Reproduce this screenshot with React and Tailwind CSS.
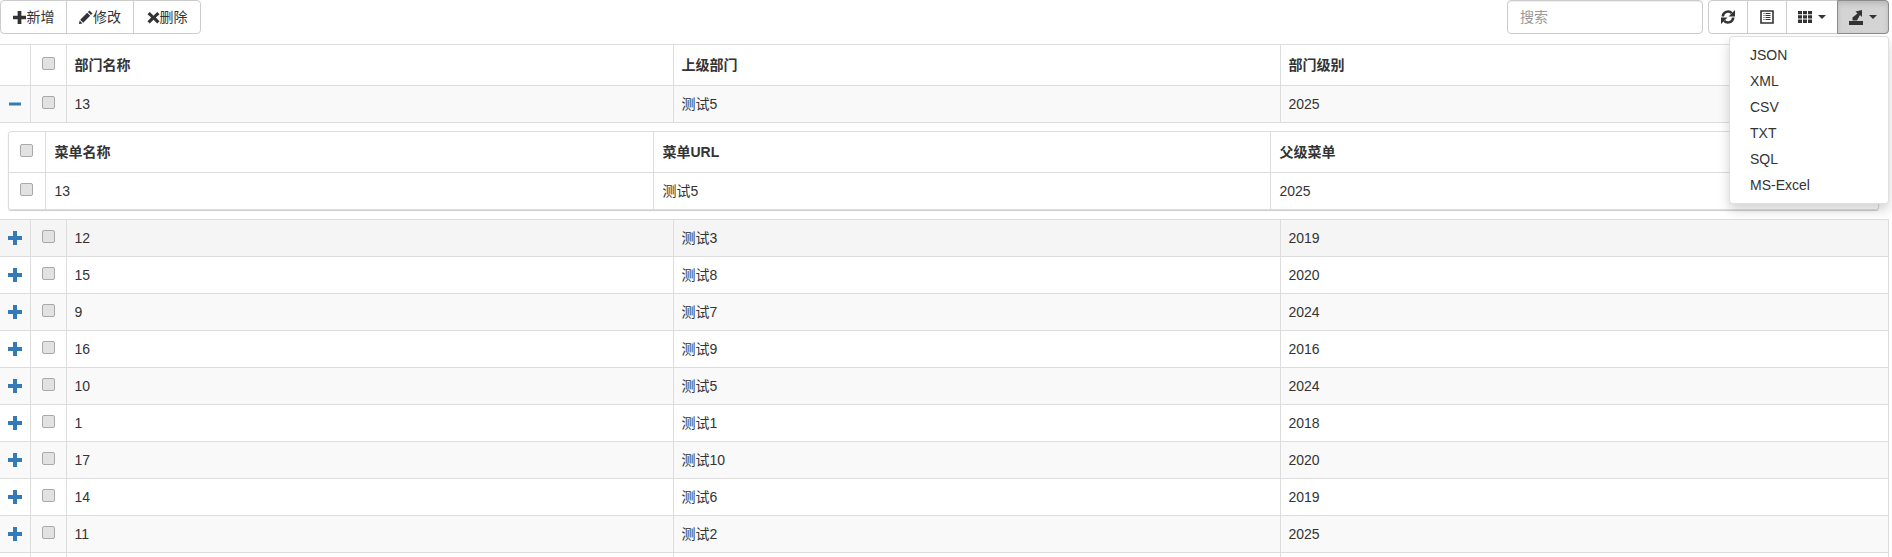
import { useState } from 'react';

const rows = [
  { id: '12', parent: '测试3', level: '2019', bg: 'bg-[#f5f5f5]' },
  { id: '15', parent: '测试8', level: '2020', bg: 'bg-white' },
  { id: '9', parent: '测试7', level: '2024', bg: 'bg-[#f9f9f9]' },
  { id: '16', parent: '测试9', level: '2016', bg: 'bg-white' },
  { id: '10', parent: '测试5', level: '2024', bg: 'bg-[#f9f9f9]' },
  { id: '1', parent: '测试1', level: '2018', bg: 'bg-white' },
  { id: '17', parent: '测试10', level: '2020', bg: 'bg-[#f9f9f9]' },
  { id: '14', parent: '测试6', level: '2019', bg: 'bg-white' },
  { id: '11', parent: '测试2', level: '2025', bg: 'bg-[#f9f9f9]' },
];

const exportTypes = ['JSON', 'XML', 'CSV', 'TXT', 'SQL', 'MS-Excel'];

const IconPlus = ({ className }) => (
  <svg viewBox="0 0 14 14" className={className} fill="currentColor">
    <path d="M5 0h4v5h5v4H9v5H5V9H0V5h5z" />
  </svg>
);

const IconMinus = ({ className }) => (
  <svg viewBox="0 0 12 14" className={className} fill="currentColor">
    <path d="M0 5.5h12v3H0z" />
  </svg>
);

const IconPencil = ({ className }) => (
  <svg viewBox="0 0 14 14" className={className} fill="currentColor">
    <path d="M10.500 0.500l3 3-1.600 1.600-3-3zM8.200 2.800l3 3-7 7-3-3zM0.600 10.500l2.900 2.900L0 14z" />
  </svg>
);

const IconRemove = ({ className }) => (
  <svg viewBox="0 0 14 14" className={className} fill="currentColor">
    <path d="M3 1l4 4 4-4 2.500 2.500-4 3.500 4 4L11 13.500l-4-4-4 4L.5 11l4-4-4-3.500z" />
  </svg>
);

const IconRefresh = ({ className }) => (
  <svg viewBox="0 0 14 14" className={className} fill="none">
    <path d="M1.800 6.500A5.200 5.200 0 0 1 10.800 3.200" stroke="currentColor" strokeWidth="2.600" />
    <path d="M12.200 7.500A5.200 5.200 0 0 1 3.200 10.800" stroke="currentColor" strokeWidth="2.600" />
    <path d="M14 0v6.500H7.500z M0 14V7.500h6.500z" fill="currentColor" />
  </svg>
);

const IconListAlt = ({ className }) => (
  <svg viewBox="0 0 14 14" className={className} fill="none" stroke="currentColor">
    <path d="M1 1h12v12H1z" strokeWidth="1.600" />
    <path d="M3.500 3.500h1M3.500 5.500h1M3.500 7.500h1M3.500 9.500h1M5.500 3.500h5M5.500 5.500h5M5.500 7.500h5M5.500 9.500h5" strokeWidth="1" />
  </svg>
);

const IconTh = ({ className }) => (
  <svg viewBox="0 0 14 14" className={className} fill="currentColor">
    <path d="M0 1h4v3.300H0zM5 1h4v3.300H5zM10 1h4v3.300h-4zM0 5.300h4v3.300H0zM5 5.300h4v3.300H5zM10 5.300h4v3.300h-4zM0 9.600h4V13H0zM5 9.600h4V13H5zM10 9.600h4V13h-4z" />
  </svg>
);

const IconExport = ({ className }) => (
  <svg viewBox="0 0 14 15" className={className} fill="currentColor">
    <path d="M0 11h14v4H0z" />
    <path d="M3.500 10.500V7.500L8.500 3.500 6.500 1.500 13 0v7l-2-2-3 5.500z" />
  </svg>
);

const Caret = () => (
  <span className="inline-block w-0 h-0 ml-[6px] border-x-[4px] border-x-transparent border-t-[4px] border-t-[#333]" />
);

const Check = () => (
  <input
    type="checkbox"
    className="appearance-none block w-[13px] h-[13px] mx-auto rounded-[2px] border border-[#a9a9a9] bg-[#e2e2e2]"
  />
);

const cellClass = 'border border-[#ddd] px-2 align-middle text-left';

function MainRow({ id, parent, level, bg, open }) {
  return (
    <tr className={`h-[37px] ${bg}`}>
      <td className="border border-[#ddd] border-l-0 align-middle">
        <div className="flex justify-center text-[#337ab7]">
          {open ? <IconMinus className="w-[12px] h-[14px]" /> : <IconPlus className="w-[14px] h-[14px]" />}
        </div>
      </td>
      <td className={cellClass}>
        <div className="-mt-[3px]"><Check /></div>
      </td>
      <td className={cellClass}>{id}</td>
      <td className={cellClass}>{parent}</td>
      <td className={cellClass}>{level}</td>
    </tr>
  );
}

export default function App() {
  const [search, setSearch] = useState('');

  return (
    <div className="relative w-[1892px] h-[557px] overflow-hidden bg-white text-[14px] leading-[20px] text-[#333] font-['Liberation_Sans','Noto_Sans_CJK_SC',sans-serif]">
      {/* Toolbar */}
      <div className="flex justify-between pr-[3px] h-[44px]">
        <div className="flex h-[34px] border border-[#ccc] rounded-[4px] divide-x divide-[#ccc]">
          <button className="w-[66px] flex items-center justify-center">
            <IconPlus className="w-[13px] h-[13px] mr-px" />新增
          </button>
          <button className="w-[67px] flex items-center justify-center">
            <IconPencil className="w-[14px] h-[14px]" />修改
          </button>
          <button className="w-[66px] flex items-center justify-center">
            <IconRemove className="w-[13px] h-[13px]" />删除
          </button>
        </div>
        <div className="flex gap-[5px]">
          <input
            value={search}
            onChange={(e) => setSearch(e.target.value)}
            placeholder="搜索"
            className="w-[196px] h-[34px] px-3 border border-[#ccc] rounded-[4px] placeholder:text-[#999] shadow-[inset_0_1px_1px_rgba(0,0,0,0.075)] outline-none"
          />
          <div className="flex h-[34px] border border-[#ccc] rounded-[4px] divide-x divide-[#ccc]">
            <button className="w-[39px] flex items-center justify-center">
              <IconRefresh className="w-[14px] h-[14px]" />
            </button>
            <button className="w-[39px] flex items-center justify-center">
              <IconListAlt className="w-[14px] h-[14px]" />
            </button>
            <button className="w-[51px] flex items-center justify-center">
              <IconTh className="w-[14px] h-[14px]" />
              <Caret />
            </button>
            <button className="w-[52px] h-[34px] -my-px -ml-px -mr-px flex items-center justify-center bg-[#d4d4d4] border border-[#8c8c8c] rounded-r-[4px] shadow-[inset_0_3px_5px_rgba(0,0,0,0.125)]">
              <IconExport className="w-[14px] h-[15px]" />
              <Caret />
            </button>
          </div>
        </div>
      </div>

      {/* Export menu */}
      <ul className="absolute left-[1729px] top-[36px] w-[160px] h-[168px] py-[5px] bg-white border border-[#ccc]/60 rounded-[4px] shadow-[0_6px_12px_rgba(0,0,0,0.175)] z-10">
        {exportTypes.map((type) => (
          <li key={type} className="h-[26px] px-[20px] leading-[26px]">{type}</li>
        ))}
      </ul>

      {/* Main table */}
      <table className="table-fixed border-collapse w-[1889px]">
        <colgroup>
          <col className="w-[30px]" />
          <col className="w-[36px]" />
          <col className="w-[607px]" />
          <col className="w-[607px]" />
          <col />
        </colgroup>
        <thead>
          <tr className="h-[41px]">
            <th className="border border-[#ddd] border-l-0" />
            <th className={cellClass}>
              <div className="-mt-[3px]"><Check /></div>
            </th>
            <th className={cellClass}>部门名称</th>
            <th className={cellClass}>上级部门</th>
            <th className={cellClass}>部门级别</th>
          </tr>
        </thead>
        <tbody>
          <MainRow id="13" parent="测试5" level="2025" bg="bg-[#f9f9f9]" open />
          <tr>
            <td colSpan={5} className="border border-[#ddd] border-x-0 px-2 pt-2 pb-[9px]">
              {/* Nested table */}
              <div className="w-[1871px] border border-[#ddd] rounded-[3px] shadow-[0_1px_1px_rgba(0,0,0,0.2)] overflow-hidden">
                <table className="table-fixed border-collapse w-full">
                  <colgroup>
                    <col className="w-[36px]" />
                    <col className="w-[608px]" />
                    <col className="w-[617px]" />
                    <col />
                  </colgroup>
                  <thead>
                    <tr className="h-[40px]">
                      <th className="border-b border-r border-[#ddd]">
                        <div className="-mt-[3px]"><Check /></div>
                      </th>
                      <th className="border-b border-r border-[#ddd] pl-[9px] text-left">菜单名称</th>
                      <th className="border-b border-r border-[#ddd] pl-[9px] text-left">菜单URL</th>
                      <th className="border-b border-[#ddd] pl-[9px] text-left">父级菜单</th>
                    </tr>
                  </thead>
                  <tbody>
                    <tr className="h-[37px]">
                      <td className="border-r border-[#ddd]">
                        <div className="-mt-[3px]"><Check /></div>
                      </td>
                      <td className="border-r border-[#ddd] pl-[9px]">13</td>
                      <td className="border-r border-[#ddd] pl-[9px]">测试5</td>
                      <td className="pl-[9px]">2025</td>
                    </tr>
                  </tbody>
                </table>
              </div>
            </td>
          </tr>
          {rows.map((row) => (
            <MainRow key={row.id} {...row} />
          ))}
          <tr className="h-[37px] bg-white">
            <td className="border border-[#ddd] border-l-0" />
            <td className={cellClass} />
            <td className={cellClass} />
            <td className={cellClass} />
            <td className={cellClass} />
          </tr>
        </tbody>
      </table>
    </div>
  );
}
